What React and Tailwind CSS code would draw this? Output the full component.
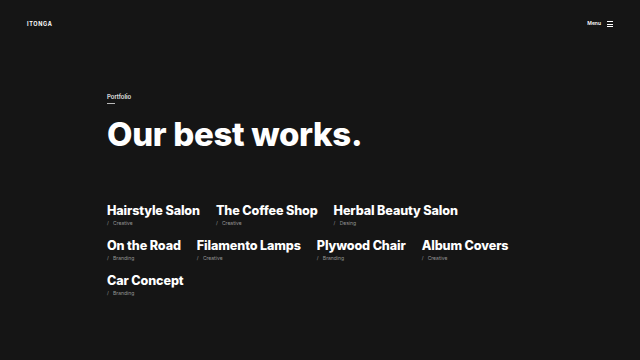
const works = [
  { title: 'Hairstyle Salon', tag: 'Creative' },
  { title: 'The Coffee Shop', tag: 'Creative' },
  { title: 'Herbal Beauty Salon', tag: 'Desing' },
  { title: 'On the Road', tag: 'Branding' },
  { title: 'Filamento Lamps', tag: 'Creative' },
  { title: 'Plywood Chair', tag: 'Branding' },
  { title: 'Album Covers', tag: 'Creative' },
  { title: 'Car Concept', tag: 'Branding' },
]

const App = () => {
  return (
    <div className="min-h-[360px] w-full bg-[#151515] text-white font-['Inter',sans-serif]">
      <header className="flex items-center justify-between px-[27px] pt-[20px] h-[28px]">
        <div className="text-[5.5px] font-bold tracking-[0.12em]">ITONGA</div>
        <div className="flex items-center gap-[6px]">
          <span className="text-[5px] font-semibold">Menu</span>
          <div className="flex flex-col gap-[1.5px] w-[6px]">
            <span className="h-[1px] bg-white"></span>
            <span className="h-[1px] bg-white"></span>
            <span className="h-[1px] bg-white"></span>
          </div>
        </div>
      </header>

      <main className="px-[107px] pt-[66px]">
        <div className="text-[6px] font-medium leading-none">Portfolio</div>
        <div className="mt-[3px] h-[1px] w-[8px] bg-white/70"></div>

        <h1 className="mt-[12px] text-[33px] font-extrabold leading-[36px] tracking-[-0.01em]">
          Our best works.
        </h1>

        <ul className="mt-[51px] flex flex-wrap gap-x-[16px] gap-y-[12px]">
          {works.map((w) => (
            <li key={w.title} className="flex flex-col">
              <span className="text-[12.6px] font-extrabold leading-[16px] tracking-[-0.01em]">{w.title}</span>
              <span className="mt-[1px] text-[5px] leading-[6px] text-[#959595]">
                /&nbsp;&nbsp;&nbsp;{w.tag}
              </span>
            </li>
          ))}
        </ul>
      </main>
    </div>
  )
}

export default App
